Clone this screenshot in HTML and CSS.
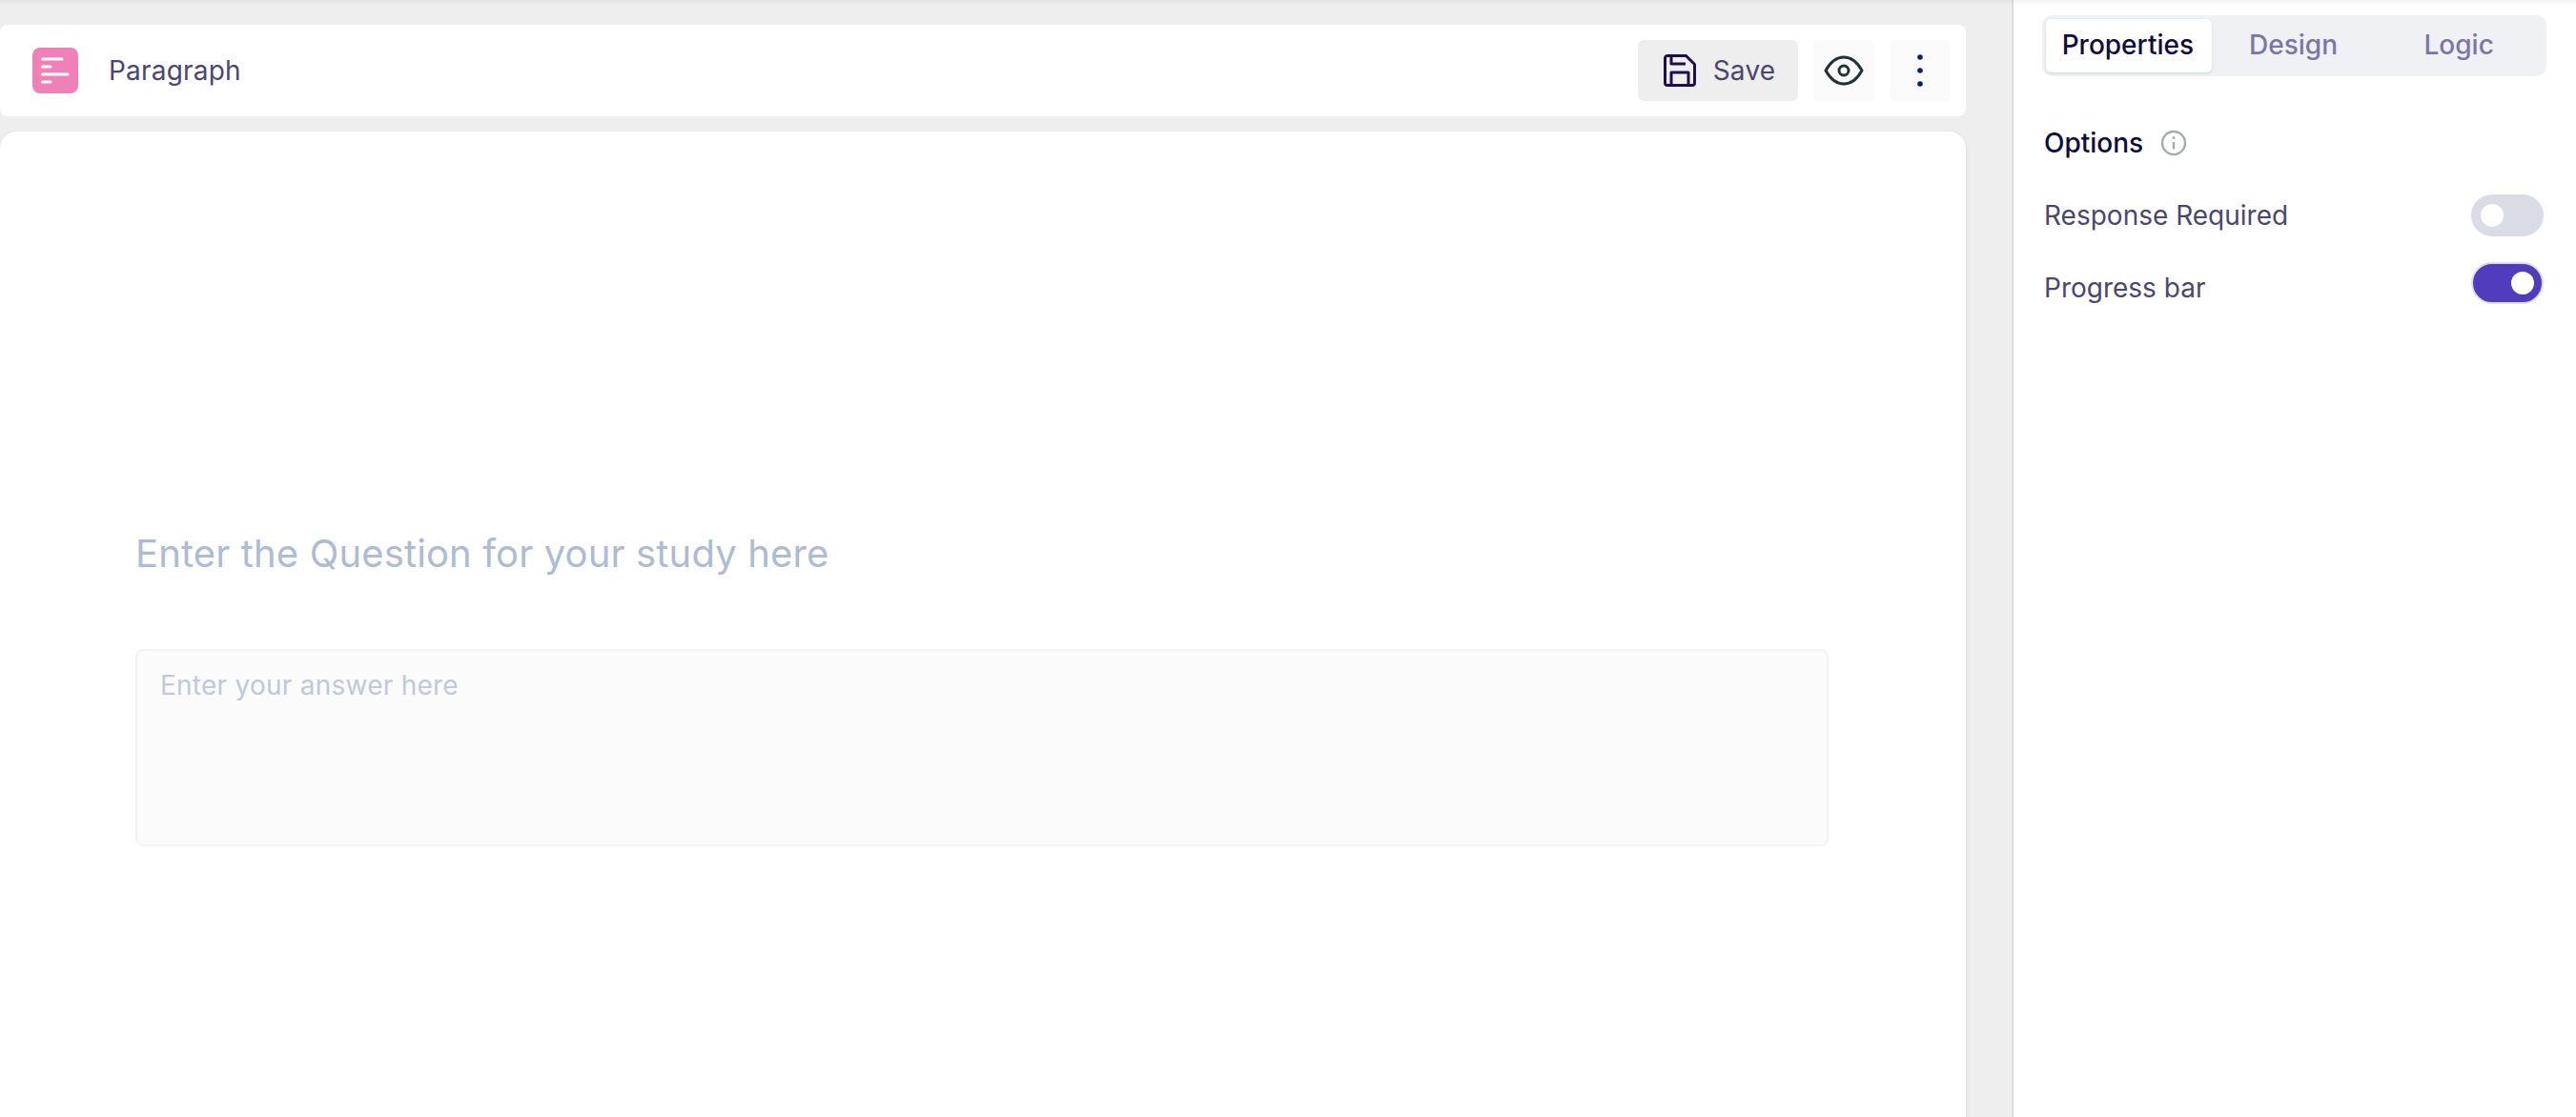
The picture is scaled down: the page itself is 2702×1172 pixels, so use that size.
FILE: index.html
```html
<!DOCTYPE html>
<html lang="en">
<head>
<meta charset="utf-8">
<title>Paragraph</title>
<link rel="stylesheet" href="styles.css">
</head>
<body>
<div class="page">
  <main class="main">
    <header class="bar">
      <div class="bar-title">
        <span class="type-icon">
          <svg width="48" height="48" viewBox="0 0 48 48"><g stroke="#fff" stroke-width="3" stroke-linecap="round"><path d="M10.5 12H31"/><path d="M10.5 20H19"/><path d="M10.5 28H37"/><path d="M10.5 36H19"/></g></svg>
        </span>
        <span class="title">Paragraph</span>
      </div>
      <div class="actions">
        <button class="btn btn-save">
          <svg width="34" height="34" viewBox="0 0 34 34" fill="none" stroke="#1f0f4f" stroke-width="3" stroke-linejoin="round"><path d="M1.5 4a2.5 2.5 0 0 1 2.5-2.5h19.500l9 9V30a2.500 2.500 0 0 1-2.500 2.500H4A2.500 2.500 0 0 1 1.500 30z"/><path d="M8 1.500V10h15"/><path d="M8 32.500V19h18v13.500"/></svg>
          <span>Save</span>
        </button>
        <button class="btn btn-icon">
          <svg width="42" height="32" viewBox="0 0 42 32" fill="none" stroke="#1f3337" stroke-width="3"><path d="M2 16C7 7 13 2 21 2s14 5 19 14c-5 9-11 14-19 14S7 25 2 16z" stroke-linejoin="round"/><circle cx="21" cy="16" r="5"/></svg>
        </button>
        <button class="btn btn-icon">
          <svg width="8" height="36" viewBox="0 0 8 36" fill="#0d2260"><circle cx="4" cy="4" r="2.8"/><circle cx="4" cy="18" r="2.8"/><circle cx="4" cy="32" r="2.8"/></svg>
        </button>
      </div>
    </header>
    <section class="card">
      <h1 class="question">Enter the Question for your study here</h1>
      <div class="answer">Enter your answer here</div>
    </section>
  </main>
  <aside class="side">
    <nav class="tabs">
      <span class="tab tab-active">Properties</span>
      <span class="tab">Design</span>
      <span class="tab">Logic</span>
    </nav>
    <div class="options-head">
      <span class="options-title">Options</span>
      <svg width="28" height="30" viewBox="0 0 28 30" fill="none"><circle cx="14" cy="15" r="12" stroke="#a4acab" stroke-width="2.4"/><circle cx="14" cy="9.500" r="1.500" fill="#a4acab"/><path d="M14 14v7.500" stroke="#a4acab" stroke-width="2.400"/></svg>
    </div>
    <div class="row row-first">
      <span>Response Required</span>
      <span class="toggle"><span class="knob"></span></span>
    </div>
    <div class="row row-second">
      <span class="row-label-low">Progress bar</span>
      <span class="toggle toggle-on"><span class="knob"></span></span>
    </div>
  </aside>
</div>
</body>
</html>
```
FILE: styles.css
```css
* { box-sizing: border-box; }
html, body { margin: 0; height: 100%; overflow: hidden; }
body { font-family: Inter, "Noto Sans", sans-serif; background: #eeeeee; }
.page {
  display: flex;
  height: 1172px;
  position: relative;
}
.page::after {
  content: "";
  position: absolute;
  left: 0;
  right: 0;
  top: 0;
  height: 6px;
  background: linear-gradient(rgba(0,0,0,.05), rgba(0,0,0,0));
}
.main {
  width: 2110px;
  padding: 26px 48px 0 0;
  display: flex;
  flex-direction: column;
  gap: 16px;
}
.bar {
  height: 96px;
  background: #fff;
  border-radius: 8px;
  display: flex;
  align-items: center;
  justify-content: space-between;
  padding: 0 16px 0 34px;
}
.bar-title { display: flex; align-items: center; gap: 32px; }
.type-icon {
  width: 48px;
  height: 48px;
  border-radius: 8px;
  background: #f080b8;
  display: block;
}
.type-icon svg { display: block; }
.title { font-size: 28px; color: #4b4670; letter-spacing: .2px; }
.actions { display: flex; gap: 16px; }
.btn {
  height: 64px;
  border: 0;
  border-radius: 6px;
  display: flex;
  align-items: center;
  justify-content: center;
  font: inherit;
  padding: 0;
}
.btn-save {
  width: 168px;
  background: #eeeeee;
  gap: 18px;
  padding-left: 3px;
  font-size: 28px;
  color: #4b4670;
  letter-spacing: .2px;
}
.btn-icon { width: 64px; background: #fafafa; }
.card {
  flex: 1;
  background: #fff;
  border-radius: 18px 18px 0 0;
  box-shadow: 0 2px 6px rgba(0,0,0,.08);
  padding: 416px 144px 0 142px;
}
.question {
  margin: 0;
  font-size: 40px;
  font-weight: 400;
  line-height: 54px;
  letter-spacing: .14px;
  color: #aebbd0;
}
.answer {
  margin-top: 73px;
  height: 207px;
  background: #fbfbfb;
  border: 2px solid #f3f3f3;
  border-radius: 8px;
  padding: 19px 24px;
  font-size: 28px;
  line-height: 34px;
  letter-spacing: .25px;
  color: #c2c8da;
}
.side {
  flex: 1;
  background: #fff;
  border-left: 2px solid #dcdcdc;
  padding: 16px 31px 0 30px;
}
.tabs {
  height: 64px;
  background: #f0f1f5;
  border-radius: 10px;
  padding: 4px;
  display: grid;
  grid-template-columns: repeat(3, 1fr);
  font-size: 28px;
  font-weight: 500;
  color: #7b76a6;
}
.tab { display: flex; align-items: center; justify-content: center; padding: 0 2px 3px 0; }
.tab-active {
  background: #fff;
  border-radius: 6px;
  color: #110b3d;
  box-shadow: 0 1px 3px rgba(0,0,0,.12);
}
.options-head {
  margin-top: 51px;
  height: 38px;
  display: flex;
  align-items: center;
  gap: 18px;
  padding-left: 2px;
  font-size: 28px;
  font-weight: 500;
  color: #110b3d;
}
.options-head svg { display: block; }
.row {
  display: flex;
  align-items: center;
  justify-content: space-between;
  height: 44px;
  padding-left: 2px;
  padding-right: 3px;
  font-size: 28px;
  color: #4b4670;
}
.row-first { margin-top: 35px; }
.row-second { margin-top: 27px; }
.row-label-low { margin-top: 9px; }
.toggle {
  width: 76px;
  height: 44px;
  border-radius: 22px;
  background: #d9dbe5;
  display: flex;
  align-items: center;
  padding-left: 10px;
}
.knob { width: 24px; height: 24px; border-radius: 50%; background: #fff; }
.toggle-on {
  background: #503cbd;
  border: 2px solid #dddddd;
  justify-content: flex-end;
  padding: 0 8px 0 0;
}
```
